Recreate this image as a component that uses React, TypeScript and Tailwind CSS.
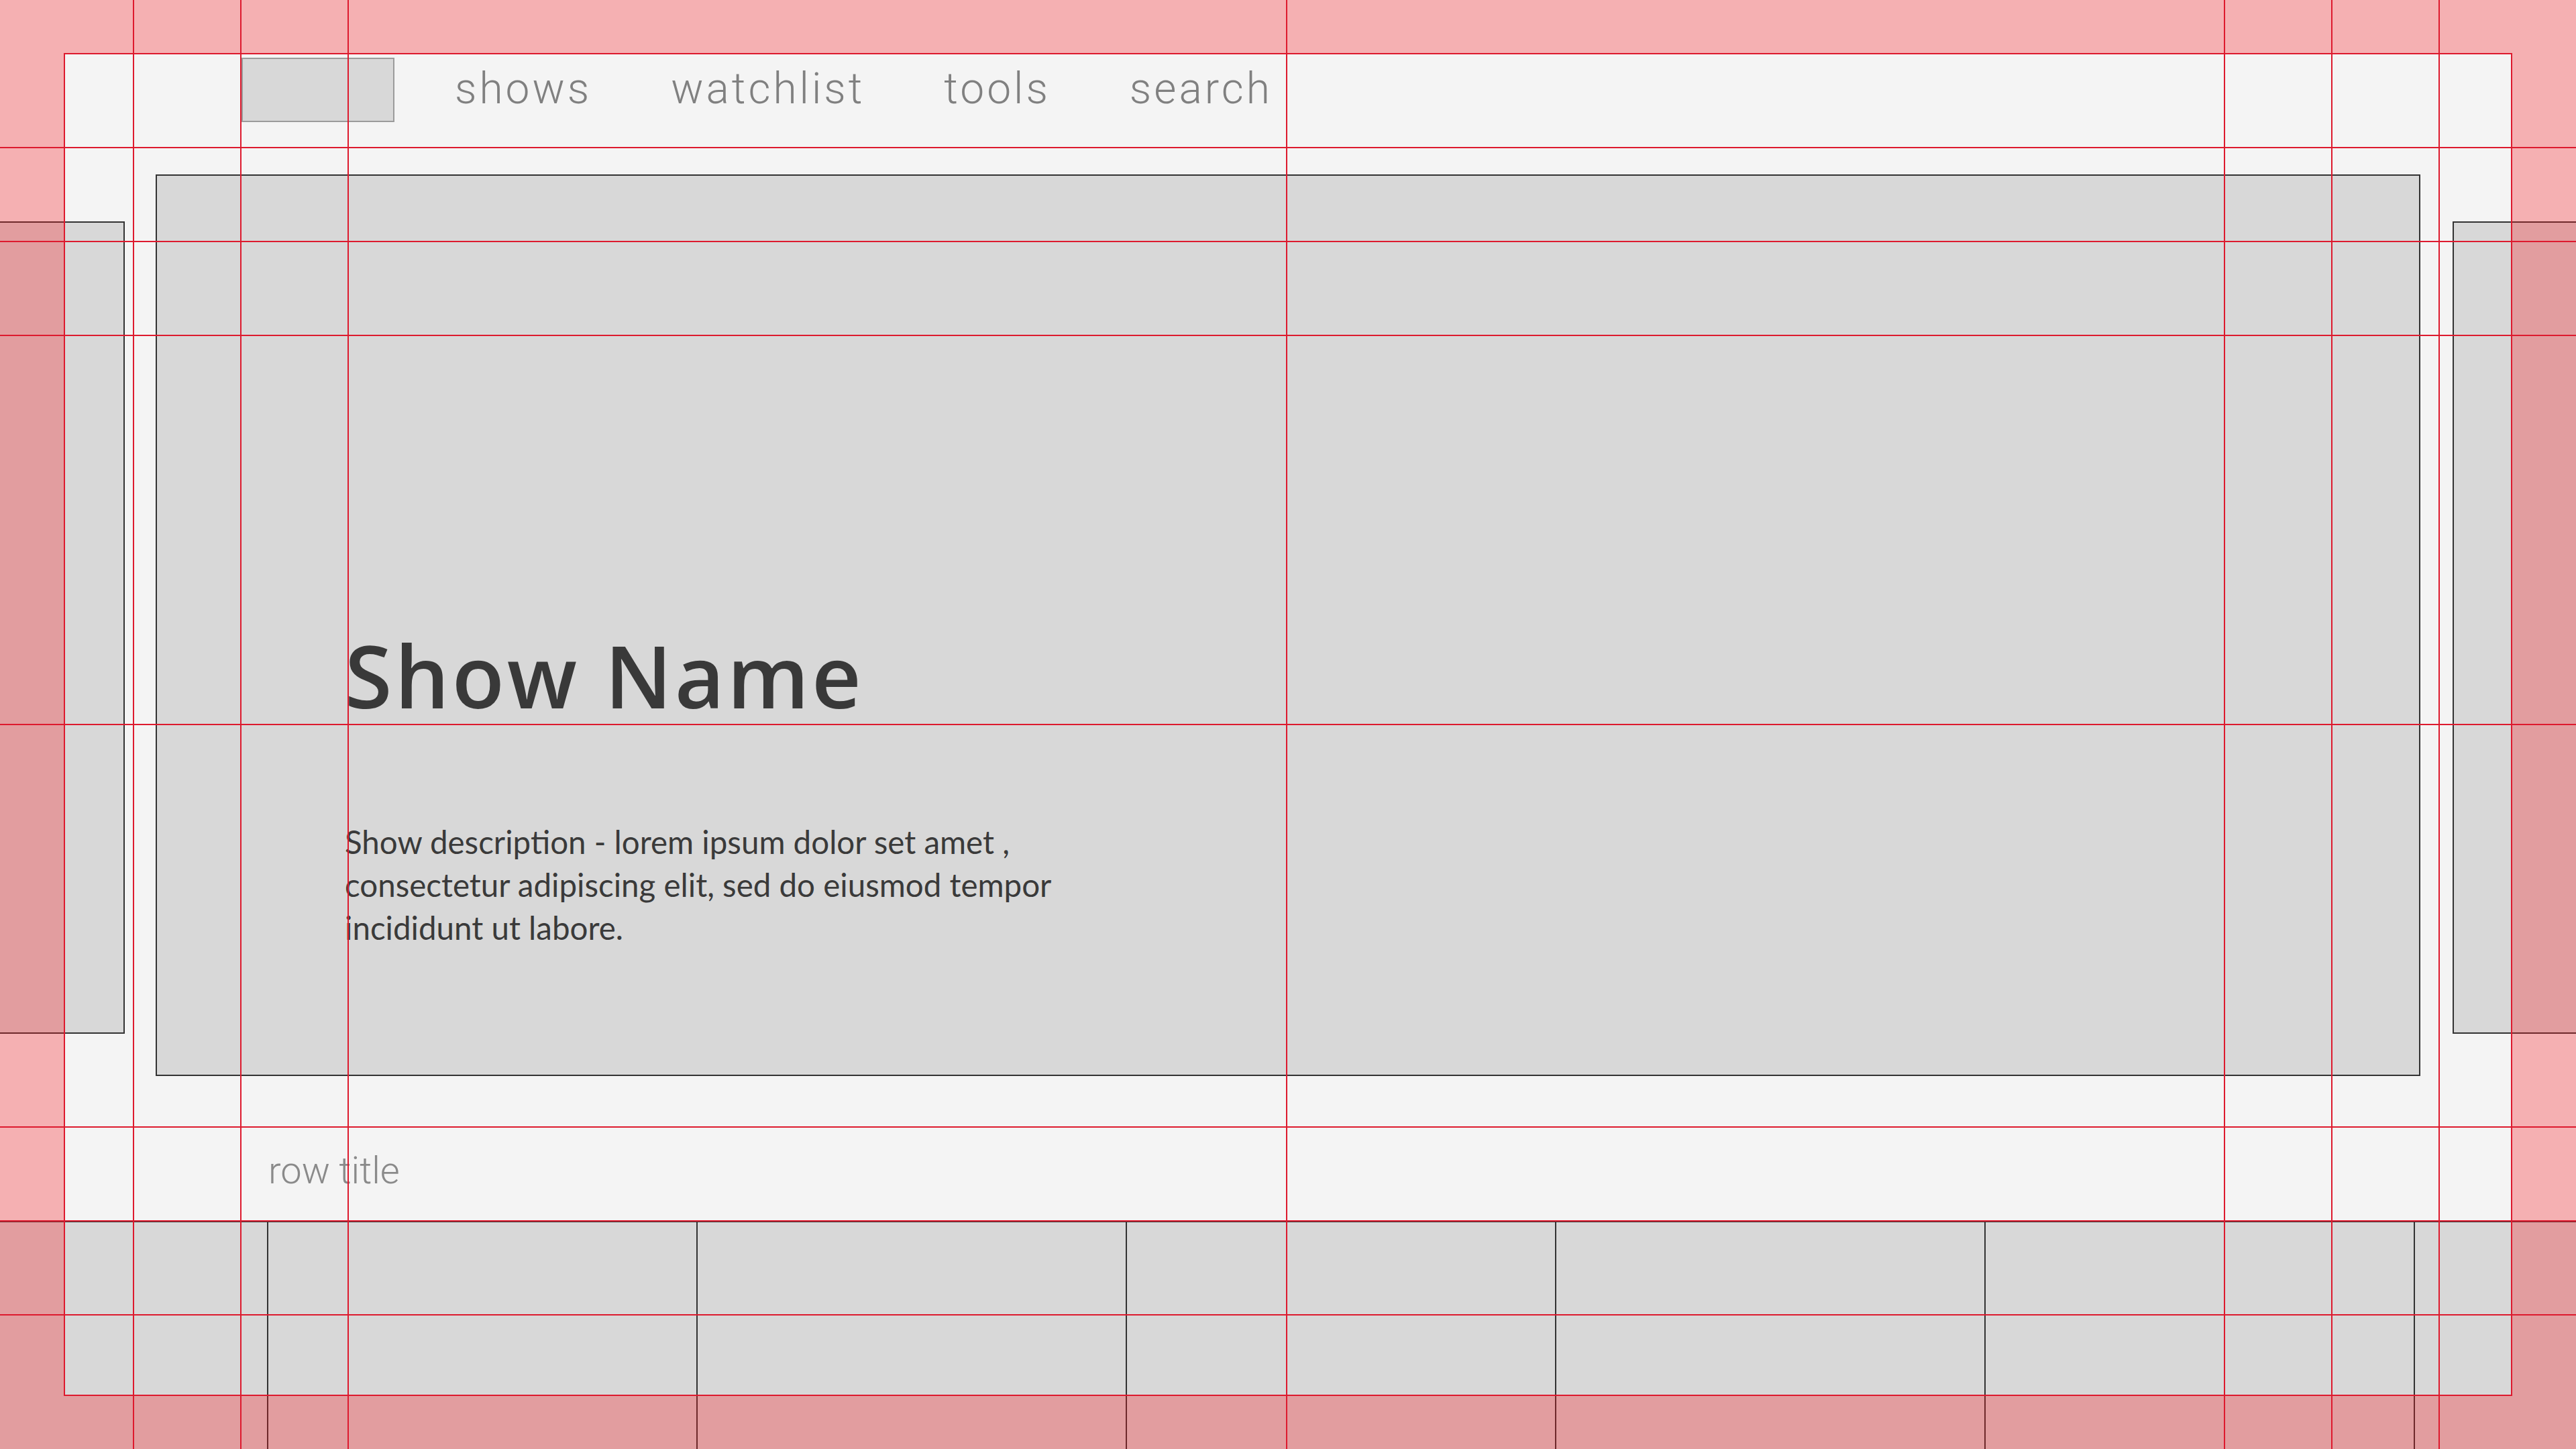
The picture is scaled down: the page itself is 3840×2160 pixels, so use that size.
const navItems = ["shows", "watchlist", "tools", "search"];

// safe-area grid guides drawn over the layout
const verticalGuides = [
  "left-[198px]",
  "left-[358px]",
  "left-[518px]",
  "left-[1917px]",
  "left-[3315px]",
  "left-[3475px]",
  "left-[3635px]",
];

const horizontalGuides = [
  "top-[219px]",
  "top-[359px]",
  "top-[499px]",
  "top-[1079px]",
  "top-[1679px]",
  "top-[1819px]",
  "top-[1959px]",
];

function Nav() {
  return (
    <div className="flex items-center pl-[360px] pt-[86px] h-[182px] shrink-0">
      <div className="w-[228px] h-[96px] border-2 border-[#9b9b9b] bg-[#d8d8d8]" />
      <ul className="flex ml-[90px] gap-[118px] -mt-[2px]">
        {navItems.map((item) => (
          <li
            key={item}
            className="font-['Roboto',sans-serif] font-light text-[64px] leading-none tracking-[4px] text-[#808080]"
          >
            {item}
          </li>
        ))}
      </ul>
    </div>
  );
}

function Hero() {
  return (
    <div className="flex items-start mt-[78px] shrink-0">
      <div className="w-[186px] h-[1211px] mt-[70px] shrink-0 border-2 border-l-0 border-[#333] bg-[#d8d8d8]" />
      <div className="w-[3376px] h-[1344px] ml-[46px] shrink-0 border-2 border-[#333] bg-[#d8d8d8] flex flex-col pl-[280px]">
        <h1 className="mt-[681px] font-['Open_Sans',sans-serif] font-semibold text-[128px] leading-none tracking-[4px] text-[#393939]">
          Show Name
        </h1>
        <p className="mt-[152px] font-['Lato',sans-serif] text-[47.5px] leading-[64px] text-[#3a3a3a]">
          Show description - lorem ipsum dolor set amet ,
          <br />
          consectetur adipiscing elit, sed do eiusmod tempor
          <br />
          incididunt ut labore.
        </p>
      </div>
      <div className="w-[300px] h-[1211px] mt-[70px] ml-[48px] shrink-0 border-2 border-r-0 border-[#333] bg-[#d8d8d8]" />
    </div>
  );
}

function Row() {
  return (
    <div className="flex flex-col shrink-0">
      <div className="mt-[113px] pl-[400px] font-['Roboto',sans-serif] font-light text-[56px] leading-none text-[#8a8a8a]">
        row title
      </div>
      <div className="mt-[47px] -ml-[240px] h-[340px] flex border-t-2 border-[#333]">
        {Array.from({ length: 7 }).map((_, i) => (
          <div key={i} className="w-[640px] h-full shrink-0 bg-[#d8d8d8] border-r-2 border-[#333]" />
        ))}
      </div>
    </div>
  );
}

function Guides() {
  return (
    <div className="absolute inset-0 pointer-events-none">
      <div className="absolute inset-0 border-solid border-x-[96px] border-y-[80px] border-[#fa141a4d]" />
      <div className="absolute left-[95px] top-[79px] w-[3650px] h-[2002px] border-2 border-[#dd1a2e]" />
      {verticalGuides.map((cls) => (
        <div key={cls} className={`absolute top-0 h-full w-[2px] bg-[#dd1a2e] ${cls}`} />
      ))}
      {horizontalGuides.map((cls) => (
        <div key={cls} className={`absolute left-0 w-full h-[2px] bg-[#dd1a2e] ${cls}`} />
      ))}
    </div>
  );
}

export default function App() {
  return (
    <div className="relative w-[3840px] h-[2160px] overflow-hidden bg-[#f4f4f4] flex flex-col">
      <Nav />
      <Hero />
      <Row />
      <Guides />
    </div>
  );
}
